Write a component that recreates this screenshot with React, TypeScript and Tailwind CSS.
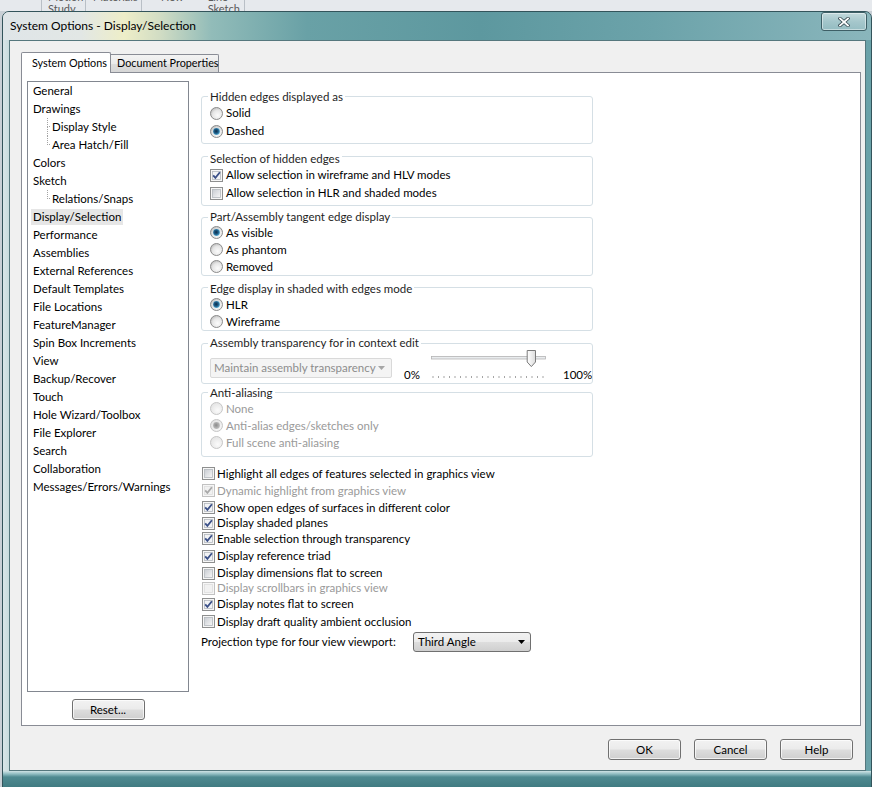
import React from "react";

type NavItem = { label: string; child?: boolean; last?: boolean; selected?: boolean };

const navItems: NavItem[] = [
  { label: "General" },
  { label: "Drawings" },
  { label: "Display Style", child: true },
  { label: "Area Hatch/Fill", child: true, last: true },
  { label: "Colors" },
  { label: "Sketch" },
  { label: "Relations/Snaps", child: true, last: true },
  { label: "Display/Selection", selected: true },
  { label: "Performance" },
  { label: "Assemblies" },
  { label: "External References" },
  { label: "Default Templates" },
  { label: "File Locations" },
  { label: "FeatureManager" },
  { label: "Spin Box Increments" },
  { label: "View" },
  { label: "Backup/Recover" },
  { label: "Touch" },
  { label: "Hole Wizard/Toolbox" },
  { label: "File Explorer" },
  { label: "Search" },
  { label: "Collaboration" },
  { label: "Messages/Errors/Warnings" },
];

// row heights follow the dialog-unit rounding of the original
const checks = [
  { label: "Highlight all edges of features selected in graphics view", on: false, disabled: false, h: "h-[17px]" },
  { label: "Dynamic highlight from graphics view", on: true, disabled: true, h: "h-[17px]" },
  { label: "Show open edges of surfaces in different color", on: true, disabled: false, h: "h-[17px]" },
  { label: "Display shaded planes", on: true, disabled: false, h: "h-[14px]" },
  { label: "Enable selection through transparency", on: true, disabled: false, h: "h-[17px]" },
  { label: "Display reference triad", on: true, disabled: false, h: "h-[18px]" },
  { label: "Display dimensions flat to screen", on: false, disabled: false, h: "h-[16px]" },
  { label: "Display scrollbars in graphics view", on: false, disabled: true, h: "h-[14px]" },
  { label: "Display notes flat to screen", on: true, disabled: false, h: "h-[18px]" },
  { label: "Display draft quality ambient occlusion", on: false, disabled: false, h: "h-[17px]" },
];

function Defs() {
  return (
    <svg width="0" height="0" className="absolute">
      <defs>
        <radialGradient id="rbg" cx="0.6" cy="0.65" r="0.7">
          <stop offset="0" stopColor="#fbfbfb" />
          <stop offset="0.6" stopColor="#e6e6e6" />
          <stop offset="1" stopColor="#b9b9b9" />
        </radialGradient>
        <radialGradient id="rdis" cx="0.6" cy="0.65" r="0.7">
          <stop offset="0" stopColor="#fbfbfb" />
          <stop offset="1" stopColor="#e2e2e2" />
        </radialGradient>
        <radialGradient id="ron" cx="0.45" cy="0.45" r="0.6">
          <stop offset="0" stopColor="#0c2b47" />
          <stop offset="0.55" stopColor="#1f5f8a" />
          <stop offset="1" stopColor="#63bde4" />
        </radialGradient>
        <radialGradient id="rondis" cx="0.45" cy="0.45" r="0.6">
          <stop offset="0" stopColor="#8a8a8a" />
          <stop offset="1" stopColor="#c4c4c4" />
        </radialGradient>
        <linearGradient id="cbg" x1="0" y1="0" x2="1" y2="1">
          <stop offset="0" stopColor="#c8ccd2" />
          <stop offset="1" stopColor="#f7f7f7" />
        </linearGradient>
        <linearGradient id="thumb" x1="0" y1="0" x2="1" y2="0">
          <stop offset="0" stopColor="#ffffff" />
          <stop offset="1" stopColor="#dcdcdc" />
        </linearGradient>
      </defs>
    </svg>
  );
}

function Radio({ on, disabled }: { on?: boolean; disabled?: boolean }) {
  return (
    <svg width="13" height="13" viewBox="0 0 13 13" className="shrink-0">
      <circle
        cx="6.5"
        cy="6.5"
        r="6"
        fill={disabled ? "url(#rdis)" : "url(#rbg)"}
        stroke={disabled ? "#c6c6c6" : "#8c8c8c"}
      />
      {on && <circle cx="6.5" cy="6.5" r="3.4" fill={disabled ? "url(#rondis)" : "url(#ron)"} />}
    </svg>
  );
}

function Check({ on, disabled }: { on?: boolean; disabled?: boolean }) {
  return (
    <svg width="13" height="13" viewBox="0 0 13 13" className="shrink-0">
      <rect x="0.5" y="0.5" width="12" height="12" fill="#f6f6f6" stroke={disabled ? "#c2c2c2" : "#8e8f8f"} />
      <rect
        x="2.5"
        y="2.5"
        width="8"
        height="8"
        fill={disabled ? "#f1f1f1" : on ? "#f2f3f5" : "url(#cbg)"}
        stroke={disabled ? "#dedede" : "#b4b8be"}
        strokeWidth="0.8"
      />
      {on && (
        <path
          d="M3.2 6.3 L5.4 8.9 L9.9 3.3"
          fill="none"
          stroke={disabled ? "#a9a9a9" : "#3b5088"}
          strokeWidth="1.8"
        />
      )}
    </svg>
  );
}

function Group({ title, className, children }: { title: string; className?: string; children: React.ReactNode }) {
  return (
    <div className={`rounded-[3px] border border-[#d5dfe5] ${className ?? ""}`}>
      <div className="-mt-[8px] ml-[6px] w-fit whitespace-nowrap bg-white px-[2px] leading-[14px] text-[#1e1e1e]">
        {title}
      </div>
      {children}
    </div>
  );
}

function RadioRow({ label, on, disabled }: { label: string; on?: boolean; disabled?: boolean }) {
  return (
    <div className="flex h-[17px] items-center gap-[3px] pl-[8px]">
      <Radio on={on} disabled={disabled} />
      <span className={disabled ? "text-[#9a9a9a]" : "text-black"}>{label}</span>
    </div>
  );
}

function WinButton({ label, className }: { label: string; className?: string }) {
  return (
    <button
      className={`flex h-[21px] items-center justify-center rounded-[3px] border border-[#707070] bg-[linear-gradient(180deg,#f2f2f2_0%,#ebebeb_48%,#dddddd_52%,#cfcfcf_100%)] text-black shadow-[inset_0_0_0_1px_rgba(255,255,255,0.7)] ${className ?? ""}`}
    >
      {label}
    </button>
  );
}

function Slider() {
  const ticks = Array.from({ length: 21 }, (_, i) => 1.5 + i * 5.5);
  return (
    <svg width="116" height="32" viewBox="0 0 116 32" className="-mt-[2px] shrink-0">
      <rect x="0.5" y="8.5" width="114" height="2.5" fill="#e9ecee" stroke="#b3b3b3" strokeWidth="0.8" />
      <path d="M96.2 2.5 h8.3 v11.5 l-4.15 4.6 l-4.15 -4.6 z" fill="url(#thumb)" stroke="#7b7b7b" />
      {ticks.map((x) => (
        <rect key={x} x={x} y="28" width="1" height="2" fill="#a5a5a5" />
      ))}
    </svg>
  );
}

function TreeList() {
  return (
    <div className="h-[611px] w-[162px] border border-[#828790] bg-white pl-[3px] leading-[18px] text-black">
      {navItems.map((it) => (
        <div key={it.label} className="flex h-[18px] items-center whitespace-nowrap">
          {it.child && (
            <>
              <div className="w-[16px] shrink-0" />
              <div className="flex h-full w-[3px] shrink-0 flex-col">
                <div className="h-[9px] border-b border-l border-dotted border-[#a3a3a3]" />
                <div className={`flex-1 ${it.last ? "" : "border-l border-dotted border-[#a3a3a3]"}`} />
              </div>
            </>
          )}
          <span className={`px-[2px] leading-[16px] ${it.selected ? "bg-[#e6e6e6]" : ""}`}>{it.label}</span>
        </div>
      ))}
    </div>
  );
}

export default function App() {
  return (
    <div className="relative h-[787px] w-[872px] overflow-hidden bg-[#c9d0d6] font-['Lato','Open_Sans',sans-serif] text-[11.5px]">
      <Defs />
      {/* app toolbar peeking above the dialog */}
      <div className="flex h-[11px] overflow-hidden whitespace-nowrap bg-[#e6e9ed] text-[11px] leading-[12px] text-[#5a5a5a]">
        <div className="w-[41px]" />
        <div className="-mt-[9px] w-[44px] border-l border-[#b9bfc6] pl-[6px]">
          Motion
          <br />
          Study
        </div>
        <div className="-mt-[9px] w-[56px] border-l border-[#b9bfc6] pl-[7px]">Materials</div>
        <div className="-mt-[9px] flex w-[103px] border-l border-[#b9bfc6]">
          <span className="pl-[19px]">New</span>
          <span className="pl-[24px]">
            Line
            <br />
            Sketch
          </span>
        </div>
        <div className="-mt-[9px] w-[20px] border-l border-[#b9bfc6]" />
      </div>

      {/* dialog window */}
      <div className="ml-[2px] flex h-[778px] w-[870px] flex-col rounded-t-[7px] border border-[#33545b] bg-[linear-gradient(90deg,#d9e6e8_0%,#a9c8cb_2%,#74a8ae_20%,#5c979e_60%,#6aa2a9_100%)]">
        <div className="flex h-[28px] items-start justify-between rounded-t-[6px] bg-[linear-gradient(90deg,#dfe5e8_0%,#e2e7e5_9%,#eeeec8_14%,#d2ddc4_18%,#92bcb9_24%,#69a1a6_35%,#5d989f_55%,#6ca3aa_75%,#8ab6bc_100%)] pl-[7px] pr-[4px]">
          <span className="mt-[7px] text-[12px] leading-[14px] text-black">System Options - Display/Selection</span>
          <button className="flex h-[19px] w-[46px] items-center justify-center rounded-[3px] border border-[#3e5f66] bg-[linear-gradient(180deg,rgba(255,255,255,0.5)_0%,rgba(255,255,255,0.25)_50%,rgba(255,255,255,0.12)_100%)] shadow-[inset_0_0_0_1px_rgba(255,255,255,0.45)]">
            <svg width="12" height="10" viewBox="0 0 12 10">
              <path d="M2 1.5 L10 8.5 M10 1.5 L2 8.5" stroke="#34474e" strokeWidth="3.4" strokeLinecap="square" />
              <path d="M2 1.5 L10 8.5 M10 1.5 L2 8.5" stroke="#ffffff" strokeWidth="1.8" strokeLinecap="square" />
            </svg>
          </button>
        </div>

        {/* client area */}
        <div className="ml-[6px] mr-[5px] flex h-[731px] flex-col border border-[#55777d] bg-[#f0f0f0] text-black">
          <div className="flex items-end whitespace-nowrap pl-[11px] pt-[11px] text-[10.8px]">
            <div className="relative z-10 -mb-[1px] flex h-[21px] w-[90px] items-center rounded-t-[2px] border-l border-r border-t border-[#898c95] bg-white pl-[10px]">
              System Options
            </div>
            <div className="flex h-[18px] w-[108px] items-center rounded-tr-[2px] border-r border-t border-[#898c95] bg-[linear-gradient(180deg,#f3f3f3_0%,#ebebeb_50%,#dedede_51%,#d6d6d6_100%)] pl-[6px]">
              Document Properties
            </div>
          </div>

          <div className="ml-[11px] mr-[4px] flex h-[654px] border border-[#898c95] bg-white pl-[5px] pt-[8px]">
            <div className="flex w-[162px] flex-col items-center">
              <TreeList />
              <WinButton label="Reset..." className="mt-[7px] w-[73px]" />
            </div>

            <div className="ml-[12px] flex w-[392px] flex-col whitespace-nowrap">
              <Group title="Hidden edges displayed as" className="mt-[15px] pb-[3px] pt-[1px]">
                <div className="flex h-[18px] items-center gap-[3px] pl-[8px]">
                  <Radio />
                  <span>Solid</span>
                </div>
                <div className="flex h-[18px] items-center gap-[3px] pl-[8px]">
                  <Radio on />
                  <span>Dashed</span>
                </div>
              </Group>

              <Group title="Selection of hidden edges" className="mt-[12px] pb-[3px] pt-[3px]">
                <div className="flex h-[18px] items-center gap-[3px] pl-[8px]">
                  <Check on />
                  <span>Allow selection in wireframe and HLV modes</span>
                </div>
                <div className="flex h-[18px] items-center gap-[3px] pl-[8px]">
                  <Check />
                  <span>Allow selection in HLR and shaded modes</span>
                </div>
              </Group>

              <Group title="Part/Assembly tangent edge display" className="mt-[11px]">
                <RadioRow label="As visible" on />
                <RadioRow label="As phantom" />
                <RadioRow label="Removed" />
              </Group>

              <Group title="Edge display in shaded with edges mode" className="mt-[11px] pt-[2px]">
                <RadioRow label="HLR" on />
                <RadioRow label="Wireframe" />
              </Group>

              <Group title="Assembly transparency for in context edit" className="mt-[12px]">
                <div className="flex items-start pb-[1px]">
                  <div className="ml-[8px] mt-[8px] flex h-[20px] w-[182px] shrink-0 items-center justify-between rounded-[2px] border border-[#d9d9d9] bg-[#f4f4f4] pl-[3px] pr-[6px] text-[#8d8d8d]">
                    <span>Maintain assembly transparency</span>
                    <svg width="7" height="4" viewBox="0 0 7 4">
                      <path d="M0 0 H7 L3.5 4 Z" fill="#a6a6a6" />
                    </svg>
                  </div>
                  <span className="ml-[12px] mt-[18px] w-[27px] shrink-0 leading-[14px]">0%</span>
                  <Slider />
                  <span className="ml-[16px] mt-[18px] leading-[14px]">100%</span>
                </div>
              </Group>

              <Group title="Anti-aliasing" className="mt-[8px] pb-[5px] pt-[1px]">
                <RadioRow label="None" disabled />
                <RadioRow label="Anti-alias edges/sketches only" on disabled />
                <RadioRow label="Full scene anti-aliasing" disabled />
              </Group>

              <div className="mt-[8px] flex flex-col">
                {checks.map((c) => (
                  <div key={c.label} className={`flex items-center gap-[2px] pl-[1px] ${c.h}`}>
                    <Check on={c.on} disabled={c.disabled} />
                    <span className={c.disabled ? "text-[#9a9a9a]" : "text-black"}>{c.label}</span>
                  </div>
                ))}
              </div>

              <div className="mt-[2px] flex h-[20px] items-center">
                <span className="w-[212px]">Projection type for four view viewport:</span>
                <div className="flex h-[20px] w-[118px] items-center justify-between rounded-[3px] border border-[#707070] bg-[linear-gradient(180deg,#f2f2f2_0%,#ebebeb_48%,#dddddd_52%,#cfcfcf_100%)] pl-[4px] pr-[5px]">
                  <span>Third Angle</span>
                  <svg width="7" height="4" viewBox="0 0 7 4">
                    <path d="M0 0 H7 L3.5 4 Z" fill="#000" />
                  </svg>
                </div>
              </div>
            </div>
          </div>

          <div className="mt-[13px] flex justify-end gap-[13px] pr-[12px]">
            <WinButton label="OK" className="w-[73px]" />
            <WinButton label="Cancel" className="w-[73px]" />
            <WinButton label="Help" className="w-[73px]" />
          </div>
        </div>

        <div className="flex-1 bg-[linear-gradient(180deg,#cfe3e5_0px,#8fbcc1_3px,#4f8a91_6px,#3f7a80_100%)]" />
      </div>
    </div>
  );
}
